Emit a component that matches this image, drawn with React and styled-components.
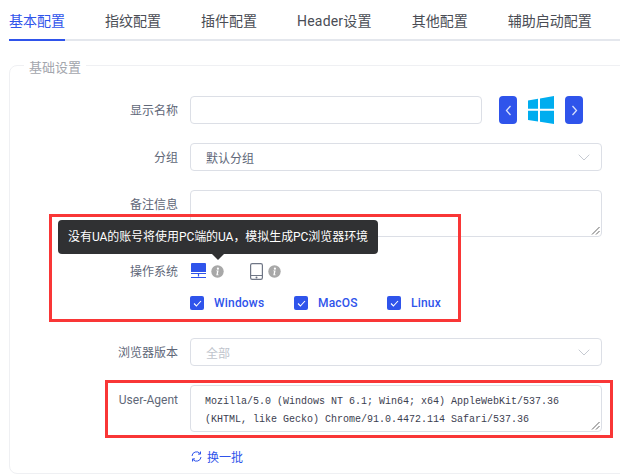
import React from 'react';
import styled, { createGlobalStyle } from 'styled-components';

const Global = createGlobalStyle`
  html, body { margin: 0; padding: 0; background: #fff; overflow: hidden; }
  * { box-sizing: border-box; }
`;
const Page = styled.div`
  position: relative; width: 620px; height: 476px; overflow: hidden;
  font-family: Roboto, "Noto Sans CJK SC", sans-serif; font-size: 13px; color: #606778;
  background: #fff;
`;
const Tabs = styled.div`
  display: flex; margin-left: 9px; height: 41px; border-bottom: 2px solid #e4e7ed; gap: 40px;
`;
const Tab = styled.div`
  height: 41px; padding-top: 1px; line-height: 40px; font-size: 14px; white-space: nowrap; flex: none;
  letter-spacing: ${p => p.$ls || 0}px;
  color: ${p => (p.$active ? '#2f54eb' : '#4a4d55')};
  border-bottom: 2px solid ${p => (p.$active ? '#2f54eb' : 'transparent')};
`;
const Fieldset = styled.fieldset`
  margin: 13px 0 0 9px; padding: 19px 0 0 0; width: 640px; min-width: 0; height: 420px;
  border: 1px solid #eff0f3; border-radius: 8px;
`;
const Legend = styled.legend`
  margin-left: 14px; padding: 5px 5px 0; font-size: 13px; line-height: 18px; color: #a3a6ad;
`;
const Form = styled.div`
  display: grid; grid-template-columns: 168px 412px; column-gap: 12px; align-items: start;
`;
const Label = styled.div`
  padding-top: 1px; text-align: right; font-size: 12px; line-height: 28px; color: #606778; white-space: nowrap;
`;
const Field = styled.div`
  display: flex; align-items: center; min-width: 0; margin-bottom: ${p => p.$mb ?? 19}px;
`;
const Input = styled.div`
  width: 292px; height: 28px; background: #fff; border: 1px solid #dcdfe6; border-radius: 4px;
`;
const NavButton = styled.div`
  width: 18px; height: 28px; border-radius: 4px; background: #2f54eb; margin-left: ${p => p.$ml}px;
  display: flex; align-items: center; justify-content: center; flex: none;
`;
const WinIcon = styled.svg`
  width: 26px; height: 28px; margin-left: 11px; flex: none;
`;
const Select = styled.div`
  width: 412px; height: 28px; border: 1px solid #dcdfe6; border-radius: 4px; padding: 0 11px 0 15px;
  display: flex; align-items: center; justify-content: space-between; font-size: 12px;
  color: ${p => (p.$muted ? '#c0c4cc' : '#606778')};
`;
const Chevron = styled.svg`
  width: 12px; height: 7px;
`;
const Area = styled.div`
  position: relative; width: 412px; height: ${p => p.$h}px; border: 1px solid #dcdfe6; border-radius: 4px;
  padding: 7px 14px 0; overflow: hidden;
`;
const Mono = styled.div`
  font-family: "Liberation Mono", "DejaVu Sans Mono", monospace; font-size: 10px; line-height: 18px;
  color: #3c4050; white-space: pre;
`;
const Grip = styled.svg`
  position: absolute; right: 1px; bottom: 1px; width: 9px; height: 9px;
`;
const OsRow = styled.div`
  display: flex; align-items: center; height: 28px;
`;
const OsItem = styled.div`
  display: flex; align-items: center; gap: 5px; width: 59px; padding-left: 1px;
`;
const Checks = styled.div`
  display: flex; align-items: center; height: 20px; margin-top: 2px;
`;
const Check = styled.div`
  display: flex; align-items: center; gap: 10px; width: ${p => p.$w}px;
  color: #2f54eb; font-size: 12px; font-weight: 500; letter-spacing: .2px;
`;
const Box = styled.span`
  width: 14px; height: 14px; border-radius: 2px; background: #2f54eb; display: flex; align-items: center; justify-content: center;
`;
const LinkRow = styled.div`
  display: flex; align-items: center; gap: 5px; color: #2f54eb; font-size: 12px; padding-left: 1px;
`;
const Tooltip = styled.div`
  position: absolute; left: 58px; top: 220px; width: 320px; height: 34px; background: #303133; color: #fff;
  border-radius: 4px; font-size: 12px; line-height: 34px; padding-left: 10px; white-space: nowrap; letter-spacing: -.06px;
  &::after {
    content: ''; position: absolute; left: 154px; top: 34px; border: 6px solid transparent; border-top-color: #303133; border-bottom: 0;
  }
`;
const Mark = styled.div`
  position: absolute; left: ${p => p.$x}px; top: ${p => p.$y}px; width: ${p => p.$w}px; height: ${p => p.$h}px;
  border: 3px solid #f93636; pointer-events: none;
`;

const Info = () => (
  <svg width="13" height="13" viewBox="0 0 13 13">
    <circle cx="6.5" cy="6.5" r="6.2" fill="#a8a8a8" />
    <circle cx="6.9" cy="3.7" r="1.1" fill="#fff" />
    <path d="M5.3 5.6h2.3L6.8 9.6h.8v.7H5.3l.8-4h-.8z" fill="#fff" />
  </svg>
);
const ChevronDown = () => (
  <Chevron viewBox="0 0 12 7"><path d="M.7.7 6 6l5.3-5.3" fill="none" stroke="#c6cad2" strokeWidth="1" /></Chevron>
);

export default function App() {
  return (
    <Page>
      <Global />
      <Tabs>
        <Tab $active>基本配置</Tab>
        <Tab>指纹配置</Tab>
        <Tab>插件配置</Tab>
        <Tab $ls={0.2}>Header设置</Tab>
        <Tab>其他配置</Tab>
        <Tab>辅助启动配置</Tab>
      </Tabs>
      <Fieldset>
        <Legend>基础设置</Legend>
        <Form>
          <Label>显示名称</Label>
          <Field>
            <Input />
            <NavButton $ml={17}>
              <svg width="7" height="11" viewBox="0 0 7 11"><path d="M5.5 1 1.5 5.5 5.5 10" fill="none" stroke="#d8e0fb" strokeWidth="1.3" /></svg>
            </NavButton>
            <WinIcon viewBox="0 0 26 28">
              <path d="M0 4.6 10 2.8V12.8H0zM12 2.5 26 0V12.8H12zM0 14.8H10V25.5L0 24zM12 14.8H26V28L12 25.8z" fill="#00adef" />
            </WinIcon>
            <NavButton $ml={11}>
              <svg width="7" height="11" viewBox="0 0 7 11"><path d="M1.5 1 5.5 5.5 1.5 10" fill="none" stroke="#d8e0fb" strokeWidth="1.3" /></svg>
            </NavButton>
          </Field>
          <Label>分组</Label>
          <Field>
            <Select>默认分组<ChevronDown /></Select>
          </Field>
          <Label>备注信息</Label>
          <Field $mb={20}>
            <Area $h={47}>
              <Grip viewBox="0 0 9 9"><path d="M8.5 1 1 8.5M8.5 5 5 8.5" stroke="#666" strokeWidth="1" /></Grip>
            </Area>
          </Field>
          <Label>操作系统</Label>
          <Field $mb={6}>
            <OsRow>
              <OsItem>
                <svg width="15" height="16" viewBox="0 0 15 16">
                  <path d="M1 0h13a1 1 0 0 1 1 1v8H0V1a1 1 0 0 1 1-1z" fill="#2f54eb" />
                  <path d="M0 10.5h15M7.5 10.5v3M0 14.5h15" stroke="#2f54eb" strokeWidth="1.2" fill="none" />
                </svg>
                <Info />
              </OsItem>
              <OsItem>
                <svg width="13" height="17" viewBox="0 0 13 17">
                  <rect x=".6" y=".6" width="11.8" height="15.8" rx="1.6" fill="none" stroke="#6f7686" strokeWidth="1.2" />
                  <path d="M.6 12.5h11.8" stroke="#6f7686" strokeWidth="1" />
                  <circle cx="6.5" cy="14.5" r="1" fill="#6f7686" />
                </svg>
                <Info />
              </OsItem>
            </OsRow>
          </Field>
          <div />
          <Field $mb={25}>
            <Checks>
              {[['Windows', 104], ['MacOS', 93], ['Linux', 60]].map(([name, w]) => (
                <Check key={name} $w={w}>
                  <Box>
                    <svg width="9" height="7" viewBox="0 0 9 7"><path d="M1 3.5 3.4 6 8 1" fill="none" stroke="#fff" strokeWidth="1.1" /></svg>
                  </Box>
                  {name}
                </Check>
              ))}
            </Checks>
          </Field>
          <Label>浏览器版本</Label>
          <Field $mb={19}>
            <Select $muted>全部<ChevronDown /></Select>
          </Field>
          <Label>User-Agent</Label>
          <Field $mb={16}>
            <Area $h={47}>
              <Mono>{'Mozilla/5.0 (Windows NT 6.1; Win64; x64) AppleWebKit/537.36\n(KHTML, like Gecko) Chrome/91.0.4472.114 Safari/537.36'}</Mono>
              <Grip viewBox="0 0 9 9"><path d="M8.5 1 1 8.5M8.5 5 5 8.5" stroke="#666" strokeWidth="1" /></Grip>
            </Area>
          </Field>
          <div />
          <LinkRow>
            <svg width="11" height="11" viewBox="0 0 11 11" fill="none" stroke="#2f54eb" strokeWidth="1">
              <path d="M1 5A4.5 4.5 0 0 1 9 2.5M10 6A4.5 4.5 0 0 1 2 8.5" />
              <path d="M9.5 .5v2.6H7M1.5 10.5V7.9H4" />
            </svg>
            换一批
          </LinkRow>
        </Form>
      </Fieldset>
      <Tooltip>没有UA的账号将使用PC端的UA，模拟生成PC浏览器环境</Tooltip>
      <Mark $x={49} $y={214} $w={412} $h={108} />
      <Mark $x={105} $y={380} $w={508} $h={58} />
    </Page>
  );
}
